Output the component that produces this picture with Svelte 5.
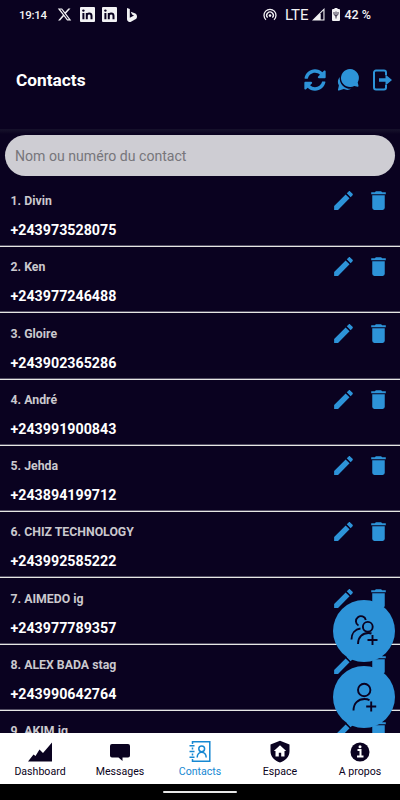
<script lang="ts">
	interface Contact {
		name: string;
		phone: string;
	}

	const contacts: Contact[] = [
		{ name: 'Divin', phone: '+243973528075' },
		{ name: 'Ken', phone: '+243977246488' },
		{ name: 'Gloire', phone: '+243902365286' },
		{ name: 'André', phone: '+243991900843' },
		{ name: 'Jehda', phone: '+243894199712' },
		{ name: 'CHIZ TECHNOLOGY', phone: '+243992585222' },
		{ name: 'AIMEDO ig', phone: '+243977789357' },
		{ name: 'ALEX BADA stag', phone: '+243990642764' },
		{ name: 'AKIM ig', phone: '' }
	];

	const tabs = [
		{ id: 'dashboard', label: 'Dashboard' },
		{ id: 'messages', label: 'Messages' },
		{ id: 'contacts', label: 'Contacts' },
		{ id: 'espace', label: 'Espace' },
		{ id: 'about', label: 'A propos' }
	];

	let activeTab = $state('contacts');
	let search = $state('');

	const visible = $derived(
		contacts
			.map((contact, i) => ({ ...contact, position: i + 1 }))
			.filter((c) => c.name.toLowerCase().includes(search.toLowerCase()) || c.phone.includes(search))
	);
</script>

<div class="screen">
	<div class="status">
		<span class="time">19:14</span>
		<svg class="x" width="15" height="15" viewBox="0 0 24 24" fill="currentColor">
			<path d="M18.244 2.25h3.308l-7.227 8.26 8.502 11.24H16.17l-5.214-6.817L4.99 21.75H1.68l7.73-8.835L1.254 2.25H8.08l4.713 6.231zm-1.161 17.52h1.833L7.084 4.126H5.117z" />
		</svg>
		{#each [1, 2] as n (n)}
			<svg class="linkedin" width="15" height="15" viewBox="0 0 15 15">
				<rect width="15" height="15" rx="1" fill="#f2f2f4" />
				<path d="M3.4 6v6.3M6.8 6v6.3M6.8 8.8c0-3.2 4.7-3 4.7 0v3.5" fill="none" stroke="#0a0220" stroke-width="2" />
				<circle cx="3.4" cy="3.6" r="1.2" fill="#0a0220" />
			</svg>
		{/each}
		<svg class="bing" width="10" height="14" viewBox="0 0 10 14" fill="currentColor">
			<path d="M0 0l2.8 1v8.8L7 7.4 5 6.4 3.8 3.7l4 1.5C9.3 5.9 10 7 10 8.4c0 1.300-.6 2.300-1.600 2.900L4 13.700c-1 .5-2 .4-2.800-.2C.4 13 0 12.300 0 11.300z" />
		</svg>
		<div class="system">
			<svg width="14" height="14" viewBox="0 0 14 14" fill="none" stroke="currentColor" stroke-width="1.3">
				<path d="M3 11.8a6 6 0 1 1 8 0M4.6 9.600a3.300 3.300 0 1 1 4.800 0" />
				<circle cx="7" cy="7.6" r="1.3" fill="currentColor" stroke="none" />
			</svg>
			<span class="lte">LTE</span>
			<svg width="13" height="13" viewBox="0 0 13 13">
				<path d="M0 12.5L12.5 0v12.500z" fill="currentColor" />
				<path d="M8.7 5.3L11.4 2.600v8.800H8.700z" fill="#0a0220" />
			</svg>
			<svg class="battery" width="8" height="13" viewBox="0 0 8 13">
				<path d="M2.5 0h3v1H7a1 1 0 0 1 1 1v10a1 1 0 0 1-1 1H1a1 1 0 0 1-1-1V2a1 1 0 0 1 1-1h1.500z" fill="currentColor" />
				<path d="M4 3.5v7M2 4v2.500l2 1.700 2-1.700V4" fill="none" stroke="#0a0220" stroke-width=".8" />
			</svg>
			<span class="percent">42 %</span>
		</div>
	</div>

	<header>
		<h1>Contacts</h1>
		<div class="actions">
			<svg width="22" height="22" viewBox="0 0 512 512" fill="currentColor">
				<path d="M370.72 133.28C339.458 104.008 298.888 87.962 255.848 88c-77.458.068-144.328 53.178-162.791 126.85-1.344 5.363-6.122 9.15-11.651 9.15H24.103c-7.498 0-13.194-6.807-11.807-14.176C33.933 94.924 134.813 8 256 8c66.448 0 126.791 26.136 171.315 68.685L463.03 40.97C478.149 25.851 504 36.559 504 57.941V192c0 13.255-10.745 24-24 24H345.941c-21.382 0-32.09-25.851-16.971-40.971l41.75-41.749zM32 296h134.059c21.382 0 32.09 25.851 16.971 40.971l-41.75 41.75c31.262 29.273 71.835 45.319 114.876 45.28 77.418-.07 144.315-53.144 162.787-126.849 1.344-5.363 6.122-9.15 11.651-9.15h57.304c7.498 0 13.194 6.807 11.807 14.176C478.067 417.076 377.187 504 256 504c-66.448 0-126.791-26.136-171.315-68.685L48.97 471.03C33.851 486.149 8 475.441 8 454.059V320c0-13.255 10.745-24 24-24z" />
			</svg>
			<svg width="22" height="22" viewBox="0 0 22 22" fill="currentColor">
				<path d="M13 0a9 9 0 0 1 7.700 13.500l.8 3.300c.1.600-.3 1-.9.900l-3.300-.8A9 9 0 1 1 13 0z" />
				<path d="M2.700 8a10.500 10.500 0 0 0 11.800 11.600c-2.400 1.500-5 1.700-7.700.5L2 21.500c-.8.200-1.200-.2-1-.9l.9-4.100C.2 13.600.7 10.400 2.700 8z" />
			</svg>
			<svg class="logout" width="19" height="22" viewBox="0 0 19 22" fill="none" stroke="currentColor" stroke-width="2">
				<path d="M13 6V3.500A2 2 0 0 0 11 1.500H3a2 2 0 0 0-2 2v15a2 2 0 0 0 2 2h8a2 2 0 0 0 2-2V16" />
				<path d="M6 9.300h6.500V5.500l6.500 5.500-6.500 5.500v-3.800H6z" fill="currentColor" stroke="none" />
			</svg>
		</div>
	</header>

	<main>
		<input bind:value={search} placeholder="Nom ou numéro du contact" />
		<ul>
			{#each visible as contact (contact.position)}
				<li>
					<div>
						<p class="name">{contact.position}. {contact.name}</p>
						<p class="phone">{contact.phone}</p>
					</div>
					<div class="tools">
						<svg width="25" height="25" viewBox="0 0 24 24" fill="currentColor">
							<path d="M20.71 7.04C21.1 6.65 21.1 6 20.71 5.63L18.37 3.29C18 2.9 17.35 2.9 16.96 3.29L15.12 5.12L18.87 8.87M3 17.25V21H6.75L17.81 9.93L14.06 6.18L3 17.25Z" />
						</svg>
						<svg width="25" height="25" viewBox="0 0 24 24" fill="currentColor">
							<path d="M19 4H15.5L14.5 3H9.5L8.5 4H5V6H19M6 19A2 2 0 0 0 8 21H16A2 2 0 0 0 18 19V7H6V19Z" />
						</svg>
					</div>
				</li>
			{/each}
		</ul>

		<div class="fabs">
			<button aria-label="Nouveau groupe">
				<svg width="62" height="62" viewBox="0 0 62 62">
					<path d="M25.500 25.500a5 5 0 1 1 7.300-5.500M18.500 39.500c0-6 3.500-10.300 9-11M25 44c0-7 4.500-11 10.500-11 1.200 0 2.200.2 3 .5M39.500 35v10M34.500 40h10" />
					<circle cx="34.8" cy="26.8" r="4.9" />
				</svg>
			</button>
			<button aria-label="Nouveau contact">
				<svg width="62" height="62" viewBox="0 0 62 62">
					<circle cx="31.2" cy="24" r="6.2" />
					<path d="M20.500 44.500c0-7 4.500-11.500 11-11.500 2 0 3.700.4 5 1.200M38.200 35.500v10M33.200 40.500h10" />
				</svg>
			</button>
		</div>
	</main>

	<nav>
		{#each tabs as tab (tab.id)}
			<button class:active={activeTab === tab.id} onclick={() => (activeTab = tab.id)}>
				<svg width="24" height="24" viewBox="0 0 24 24" fill="currentColor">
					{#if tab.id === 'dashboard'}
						<path d="M0 21.500l5.500-7 2 1.500 4-6.500 3.500 3.500L24.500 2v19.500z" />
					{:else if tab.id === 'messages'}
						<path d="M4 4h16a2 2 0 0 1 2 2v9.500a2 2 0 0 1-2 2h-5.500V21l-4-3.500H4a2 2 0 0 1-2-2V6a2 2 0 0 1 2-2z" />
					{:else if tab.id === 'contacts'}
						<g fill="none" stroke="currentColor" stroke-width="1.5">
							<path d="M4.500 4V1.700h17.300v19.500H4.500V19M4.500 7.500v2M4.500 13.500v2M1.500 5.700H6.500M1.500 11.500H6.500M1.500 17.300H6.500" />
							<circle cx="13.700" cy="8.800" r="2.9" />
							<path d="M9.200 17.500c0-7 9-7 9 0" />
						</g>
					{:else if tab.id === 'espace'}
						<path fill-rule="evenodd" d="M12 .7l9.500 3.700v6.800c0 5.200-4 9.500-9.500 11.300-5.500-1.800-9.500-6.100-9.500-11.300V4.400zM12 5.200L5.800 11h1.700v5.500h3.300v-3.700h2.400v3.700h3.300V11h1.700z" />
					{:else}
						<circle cx="12" cy="12" r="9.5" />
						<path d="M9.500 10h3v6M9 16.500h6.500" fill="none" stroke="#fff" stroke-width="2" />
						<circle cx="12" cy="6.8" r="1.5" fill="#fff" />
					{/if}
				</svg>
				<span>{tab.label}</span>
			</button>
		{/each}
	</nav>
	<div class="gesture"><span></span></div>
</div>

<style>
	:global(body) {
		margin: 0;
	}

	.screen {
		width: 400px;
		height: 800px;
		display: flex;
		flex-direction: column;
		overflow: hidden;
		background: #0a0220;
		color: #fff;
		font-family: Roboto, sans-serif;
	}

	.status {
		height: 30px;
		box-sizing: border-box;
		padding: 0 29px 1px 19px;
		display: flex;
		align-items: center;
		color: #f2f2f4;
		font-size: 12.5px;
		font-weight: 500;
	}

	.time {
		width: 38px;
		font-size: 11.5px;
		letter-spacing: -0.3px;
	}

	.linkedin {
		margin-left: 7px;
	}

	.x {
		margin-right: 1px;
	}

	.bing {
		margin-left: 10px;
	}

	.system {
		margin-left: auto;
		display: flex;
		align-items: center;
	}

	.lte {
		margin: 0 4px 0 8px;
		font-size: 15px;
		font-weight: 400;
	}

	.battery {
		margin: 0 4px 0 7px;
	}

	header {
		height: 100px;
		box-sizing: border-box;
		padding: 1px 8px 0 16px;
		display: flex;
		align-items: center;
		justify-content: space-between;
		border-bottom: 1px solid #15102a;
	}

	h1 {
		margin: 0;
		font-size: 17.3px;
		font-weight: 700;
	}

	.actions {
		display: flex;
		align-items: center;
		gap: 11px;
		color: #2d93d8;
	}

	.logout {
		margin-left: 3px;
	}

	main {
		position: relative;
		height: 603px;
		flex: none;
		overflow: hidden;
		background: linear-gradient(#15102a, #0a0220 4px);
	}

	input {
		display: block;
		width: 390px;
		height: 41px;
		box-sizing: border-box;
		margin: 5px 5px 4.7px;
		padding: 0 10px;
		border: 0;
		border-radius: 21px;
		background: #cecdd3;
		color: #222;
		font-family: inherit;
		font-size: 14.1px;
	}

	input::placeholder {
		color: #77767b;
		opacity: 1;
	}

	ul {
		margin: 0;
		padding: 0;
		list-style: none;
	}

	li {
		height: 66.3px;
		box-sizing: border-box;
		padding: 11.3px 9px 0 10.5px;
		display: flex;
		justify-content: space-between;
		border-bottom: 1px solid #e6e6e4;
		box-shadow: inset 0 -1px rgba(255, 255, 255, 0.3);
	}

	p {
		margin: 0;
	}

	.name {
		height: 29px;
		color: #cac9ce;
		font-size: 12.3px;
		font-weight: 700;
		line-height: 18px;
	}

	.phone {
		font-size: 14.25px;
		font-weight: 700;
		line-height: 18px;
	}

	.tools {
		display: flex;
		gap: 10px;
		margin-top: -4px;
		color: #2d93d8;
	}

	.fabs {
		position: absolute;
		right: 5px;
		bottom: 5px;
		display: grid;
		gap: 4px;
	}

	.fabs button {
		width: 62px;
		height: 62px;
		padding: 0;
		border: 0;
		border-radius: 50%;
		background: #2d93d8;
	}

	.fabs svg {
		display: block;
		fill: none;
		stroke: #0a0220;
		stroke-width: 1.9;
	}

	nav {
		height: 51px;
		flex: none;
		display: grid;
		grid-template-columns: repeat(5, 1fr);
		background: #fff;
	}

	nav button {
		padding: 7px 0 0;
		border: 0;
		background: none;
		display: flex;
		flex-direction: column;
		align-items: center;
		color: #0a0220;
		font-family: inherit;
		font-size: 10.6px;
		line-height: 16px;
	}

	nav .active {
		color: #1688d2;
	}

	.gesture {
		flex: 1;
		display: flex;
		align-items: center;
		justify-content: center;
		background: #000;
	}

	.gesture span {
		width: 74px;
		height: 2px;
		border-radius: 1px;
		background: #e6e6e6;
	}
</style>
